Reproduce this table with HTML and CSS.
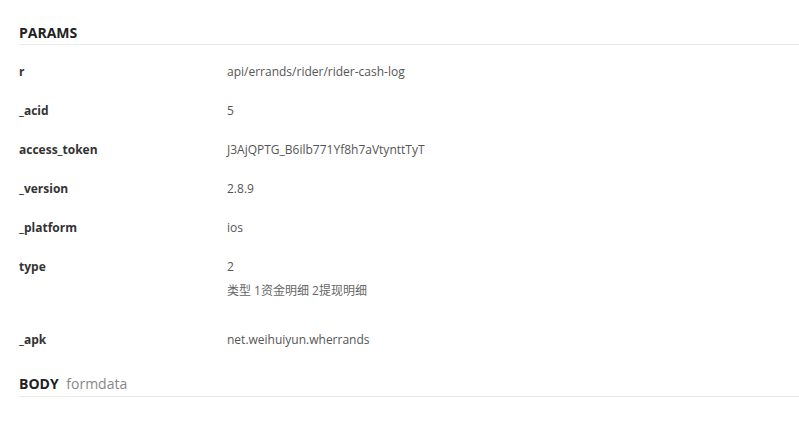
FILE: index.html
```html
<!DOCTYPE html>
<html lang="zh">
<head>
    <meta charset="UTF-8">
    <meta name="viewport" content="width=device-width, initial-scale=1.0">
    <title>rider-cash-log</title>
    <link rel="stylesheet" href="styles.css">
</head>
<body>

    <!-- 参数 -->
    <div class="section">
        <h3 class="section-title">PARAMS</h3>
        <div class="param-list">
            <div class="param-row">
                <div class="param-name">r</div>
                <div class="param-value">api/errands/rider/rider-cash-log</div>
            </div>
            <div class="param-row">
                <div class="param-name">_acid</div>
                <div class="param-value">5</div>
            </div>
            <div class="param-row">
                <div class="param-name">access_token</div>
                <div class="param-value">J3AjQPTG_B6ilb771Yf8h7aVtynttTyT</div>
            </div>
            <div class="param-row">
                <div class="param-name">_version</div>
                <div class="param-value">2.8.9</div>
            </div>
            <div class="param-row">
                <div class="param-name">_platform</div>
                <div class="param-value">ios</div>
            </div>
            <div class="param-row">
                <div class="param-name">type</div>
                <div class="param-value">
                    2
                    <div class="param-desc">类型 1资金明细 2提现明细</div>
                </div>
            </div>
            <div class="param-row">
                <div class="param-name">_apk</div>
                <div class="param-value">net.weihuiyun.wherrands</div>
            </div>
        </div>
    </div>

    <!-- 请求体 -->
    <div class="section">
        <h3 class="section-title">BODY <span class="section-sub">formdata</span></h3>
    </div>

</body>
</html>
```

FILE: styles.css
```css
body {
    font-family: "Open Sans", "Noto Sans CJK SC", sans-serif;
    background-color: #fff;
    color: #333;
    margin: 0;
    padding: 23px 0 0 19px;
}

.section-title {
    margin: 0;
    font-size: 14px;
    line-height: 20px;
    font-weight: 700;
    color: #222;
    padding-bottom: 1px;
    border-bottom: 1px solid #eaeaea;
}

.section + .section .section-title {
    margin-top: 14px;
    padding-bottom: 2px;
}

.section-sub {
    font-weight: 400;
    color: #888;
    margin-left: 4px;
}

.param-list {
    margin-top: 8px;
}

.param-row {
    display: flex;
    padding: 10px 0 11px;
    font-size: 12px;
    line-height: 18px;
}

.param-name {
    width: 208px;
    flex-shrink: 0;
    font-weight: 700;
    color: #333;
}

.param-value {
    color: #555;
}

.param-desc {
    margin: 6px 0 10px;
    color: #666;
}
```
